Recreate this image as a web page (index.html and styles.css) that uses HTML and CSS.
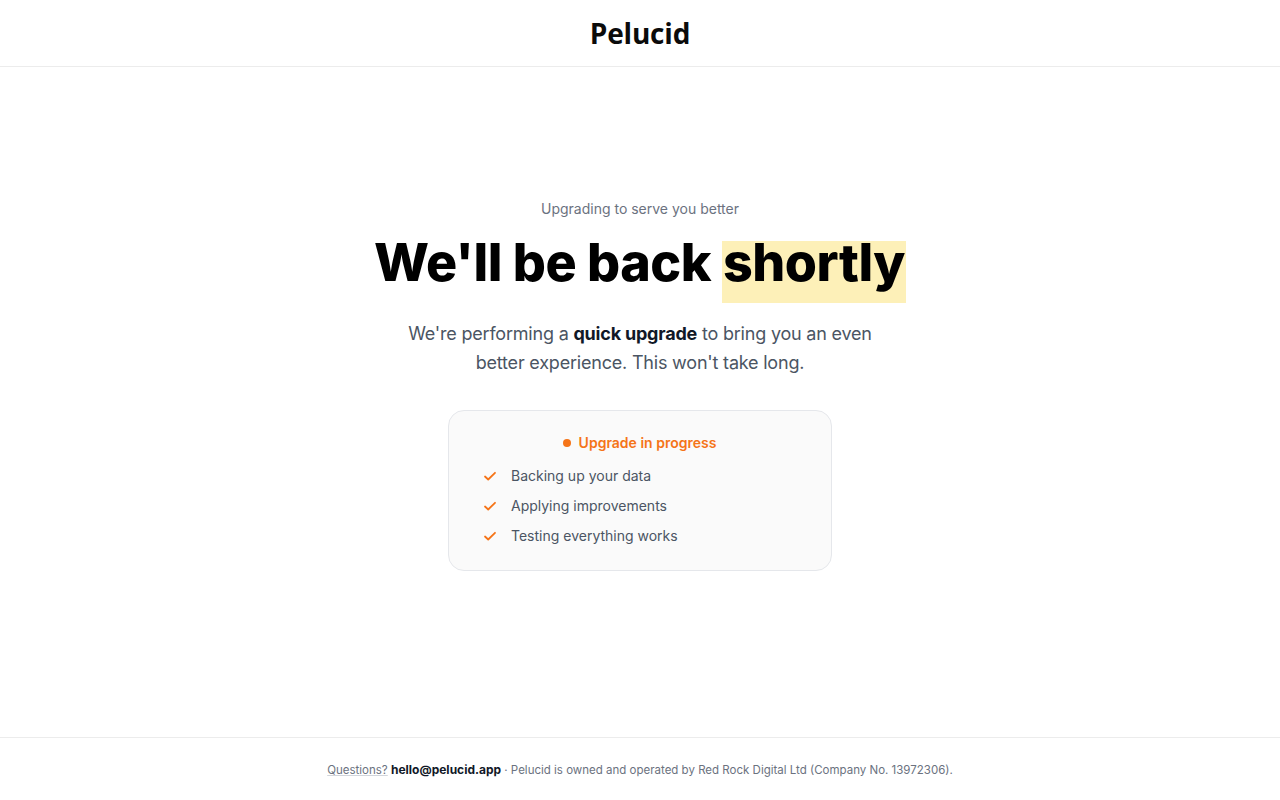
FILE: index.html
```html
<!DOCTYPE html>
<html lang="en">
<head>
<meta charset="utf-8">
<title>Pelucid — Upgrading</title>
<link rel="stylesheet" href="styles.css">
</head>
<body>
<div class="page">
  <header class="topbar">
    <div class="logo">Pelucid</div>
  </header>

  <main class="main">
    <div class="hero">
      <p class="eyebrow">Upgrading to serve you better</p>
      <h1 class="title">We'll be back <span class="mark">shortly</span></h1>
      <p class="lead">We're performing a <strong>quick upgrade</strong> to bring you an even better experience. This won't take long.</p>

      <section class="status">
        <div class="status-head"><span class="dot"></span>Upgrade in progress</div>
        <ul class="steps">
          <li class="step">
            <svg class="check" viewBox="0 0 16 16" width="16" height="16"><path d="M3 8.5l3.2 3L13 4.8" fill="none" stroke="currentColor" stroke-width="1.8" stroke-linecap="round" stroke-linejoin="round"/></svg>
            <span>Backing up your data</span>
          </li>
          <li class="step">
            <svg class="check" viewBox="0 0 16 16" width="16" height="16"><path d="M3 8.5l3.2 3L13 4.8" fill="none" stroke="currentColor" stroke-width="1.8" stroke-linecap="round" stroke-linejoin="round"/></svg>
            <span>Applying improvements</span>
          </li>
          <li class="step">
            <svg class="check" viewBox="0 0 16 16" width="16" height="16"><path d="M3 8.5l3.2 3L13 4.8" fill="none" stroke="currentColor" stroke-width="1.8" stroke-linecap="round" stroke-linejoin="round"/></svg>
            <span>Testing everything works</span>
          </li>
        </ul>
      </section>
    </div>
  </main>

  <footer class="footer">
    <p><span class="q">Questions?</span> <a class="mail" href="mailto:hello@pelucid.app">hello@pelucid.app</a> · Pelucid is owned and operated by Red Rock Digital Ltd (Company No. 13972306).</p>
  </footer>
</div>
</body>
</html>
```

FILE: styles.css
```css
* { box-sizing: border-box; }

html, body {
  margin: 0;
  padding: 0;
  background: #ffffff;
}

body {
  font-family: Inter, "Noto Sans", "Liberation Sans", sans-serif;
  color: #111111;
}

.page {
  min-height: 800px;
  height: 100vh;
  display: flex;
  flex-direction: column;
}

.topbar {
  height: 67px;
  flex: 0 0 67px;
  border-bottom: 1px solid #ececec;
  display: flex;
  align-items: center;
  justify-content: center;
}

.logo {
  font-family: "Open Sans", Inter, sans-serif;
  font-weight: 700;
  font-size: 28px;
  line-height: 32px;
  letter-spacing: -0.2px;
  color: #0b0b0b;
}

.main {
  flex: 1;
  display: flex;
  align-items: center;
  justify-content: center;
  padding-bottom: 34px;
}

.hero {
  display: flex;
  flex-direction: column;
  align-items: center;
  text-align: center;
}

.eyebrow {
  margin: 0;
  font-size: 14px;
  line-height: 18px;
  color: #6b7280;
}

.title {
  margin: 23px 0 0;
  font-size: 52px;
  line-height: 44px;
  font-weight: 800;
  letter-spacing: -0.5px;
  color: #000000;
}

/* highlighter block sits a little below the word */
.mark {
  display: inline-block;
  background: #fdf0b8;
  line-height: 44px;
  padding: 0 1px 18px;
}

.lead {
  margin: 16px 0 0;
  max-width: 490px;
  font-size: 18px;
  line-height: 29px;
  letter-spacing: -0.2px;
  color: #4b5563;
}

.lead strong {
  color: #111827;
  font-weight: 700;
}

.status {
  margin-top: 33px;
  width: 384px;
  background: #fafafa;
  border: 1px solid #e5e7eb;
  border-radius: 16px;
  padding: 22px 34px 24px 33px;
}

.status-head {
  display: flex;
  align-items: center;
  justify-content: center;
  gap: 8px;
  font-size: 14px;
  line-height: 20px;
  font-weight: 600;
  color: #f57418;
}

.dot {
  width: 8px;
  height: 8px;
  border-radius: 50%;
  background: #f57418;
}

.steps {
  list-style: none;
  margin: 13px 0 0;
  padding: 0;
  display: flex;
  flex-direction: column;
  gap: 10px;
}

.step {
  display: flex;
  align-items: center;
  gap: 13px;
  font-size: 14px;
  line-height: 20px;
  color: #4b5563;
  text-align: left;
}

.check {
  color: #f57418;
  flex: 0 0 16px;
}

.footer {
  flex: 0 0 63px;
  border-top: 1px solid #ececec;
  display: flex;
  align-items: center;
  justify-content: center;
}

.footer p {
  margin: 0;
  font-size: 11.5px;
  color: #6b7280;
}

.q {
  text-decoration: underline;
  text-decoration-color: #d1d5db;
}

.mail {
  color: #111827;
  font-weight: 700;
  font-size: 12px;
  text-decoration: none;
}
```
